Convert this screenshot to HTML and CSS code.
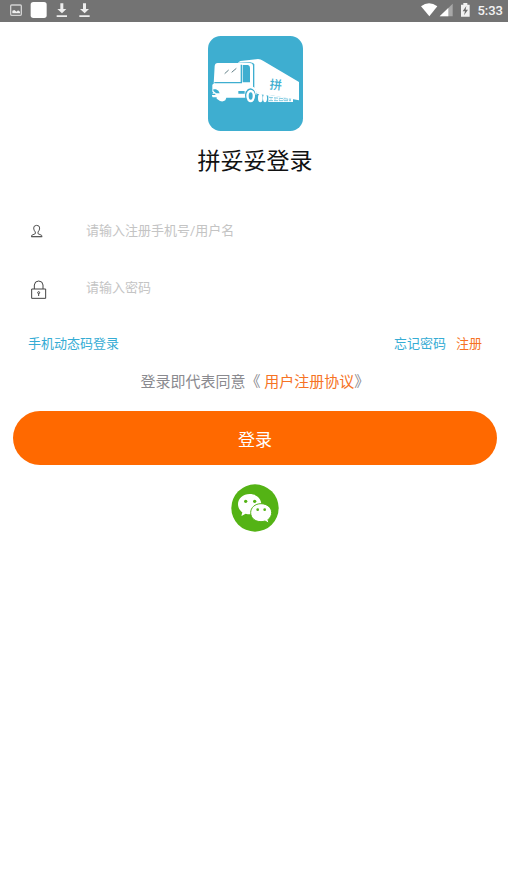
FILE: index.html
```html
<!DOCTYPE html>
<html lang="zh-CN">
<head>
<meta charset="utf-8">
<meta name="viewport" content="width=device-width, initial-scale=1">
<title>拼妥妥登录</title>
<link rel="stylesheet" href="styles.css">
</head>
<body>
<header class="status">
  <svg class="status-icons" width="92" height="22" viewBox="0 0 276 66" aria-hidden="true">
    <rect x="32" y="15" width="32" height="31" rx="3" fill="none" stroke="#d2d2d2" stroke-width="4"/>
    <path d="M37 40V32l6-2 7 5 4-4 6 4v5z" fill="#f0f0f0"/>
    <rect x="92" y="6" width="48" height="48" rx="8" fill="#fff"/>
    <g fill="#eee">
      <path d="M181 10h9v17h9l-13 13-14-13h9zM170 46h31v5h-31z"/>
      <path d="M249 10h9v17h9l-13 13-14-13h9zM238 46h31v5h-31z"/>
    </g>
  </svg>
  <div class="status-right">
    <svg class="status-icons" width="52" height="22" viewBox="36 0 156 66" aria-hidden="true">
      <path d="M36 19Q60 0 85 19L61 49z" fill="#fff"/>
      <path d="M131 11v38H92z" fill="#a8a8a8"/>
      <path d="M118 24v25H92z" fill="#fff"/>
      <path d="M163 9h12v5h7v36h-26V14h7z" fill="#f0f0f0"/>
      <path d="M172 18l-11 16h7l-3 12 12-17h-7z" fill="#6c6c6c"/>
    </svg>
    <span class="clock">5:33</span>
  </div>
</header>
<main class="login">
  <svg class="logo" width="95" height="95" viewBox="21 18 285 285" role="img" aria-label="拼妥妥">
    <rect x="21" y="18" width="285" height="285" rx="38" fill="#3eaed0"/>
    <path d="M118 93L171 87Q179 88 186 92L294 156V211L190 192 160 186V103Q158 98 148 97L110 98z" fill="#fff"/>
    <path d="M50 99H146Q156 99 156 108V188H134V203H76L73 211Q66 216 57 213L47 206V202H35Q31 197 34 191L37 188 34 185V164L38 161 41 108Q42 99 50 99z" fill="#fff"/>
    <path d="M40 158H121V104" fill="none" stroke="#3eaed0" stroke-width="4"/>
    <path d="M125 105H141Q147 106 147 114V157H125z" fill="#3eaed0"/>
    <path d="M71 131l12-11M92 127l14-12" stroke="#617f87" stroke-width="3"/>
    <path d="M37 178H45Q54 181 56 190H46Q40 186 37 182zM112 183H131V191H112zM33 191H43V195H33z" fill="#3eaed0"/>
    <ellipse cx="150" cy="196" rx="18" ry="25" fill="#3eaed0"/>
    <path d="M130 180Q135 170 149 168Q164 170 167 186L170 194H164Q162 177 149 175Q139 176 136 183z" fill="#fff"/>
    <ellipse cx="149" cy="198" rx="13" ry="19" fill="#fff"/>
    <ellipse cx="149" cy="198" rx="6" ry="11" fill="#3eaed0"/>
    <path d="M166 187L204 194V218H168z" fill="#3eaed0"/>
    <path d="M164 185L204 191V197L168 191z" fill="#fff"/>
    <ellipse cx="178" cy="204" rx="7" ry="13" fill="#fff"/>
    <ellipse cx="192" cy="205" rx="6" ry="12" fill="#fff"/>
    <path d="M202 194L276 206V216H202z" fill="#fff"/>
    <path d="M204 202L270 208M204 212H270" stroke="#3eaed0" stroke-width="2" stroke-dasharray="12 3"/>
    <path d="M210 204v8M222 204v8M235 205v8M248 206v6M260 207v5" stroke="#8ccee2" stroke-width="2"/>
    <text class="logo-text" x="206" y="178" transform="rotate(5 224 164)">拼</text>
  </svg>
  <h1 class="title">拼妥妥登录</h1>
  <form class="form">
    <div class="field">
      <label class="field-label" for="user" aria-label="用户名">
        <svg width="22" height="22" viewBox="24 12 66 66" fill="none" stroke="#555" stroke-width="3" aria-hidden="true">
          <path d="M46 48Q41 43 41 36Q41 28 50 28Q59 28 59 36Q59 43 54 48V53L65 58V62H35V58L46 53zM33 62H67"/>
        </svg>
      </label>
      <input class="field-input" id="user" type="text" placeholder="请输入注册手机号/用户名">
    </div>
    <div class="field">
      <label class="field-label" for="password" aria-label="密码">
        <svg width="22" height="22" viewBox="24 184 66 66" fill="none" stroke="#444" stroke-width="3" aria-hidden="true">
          <path d="M35 220H77V248H35zM43 220V208Q44 196 56 196Q68 196 69 208V220"/>
          <circle cx="56" cy="231" r="3"/><path d="M56 234v7"/>
        </svg>
      </label>
      <input class="field-input" id="password" type="password" placeholder="请输入密码">
    </div>
    <nav class="links">
      <a class="link" href="#code">手机动态码登录</a>
      <a class="link link-end" href="#forgot">忘记密码</a>
      <a class="link link-accent" href="#register">注册</a>
    </nav>
    <p class="agreement">登录即代表同意《 <a class="link-accent" href="#terms">用户注册协议</a>》</p>
    <button class="submit" type="submit">登录</button>
  </form>
  <button class="wechat" type="button" aria-label="微信登录">
    <svg width="48" height="48" viewBox="27 18 144 144" aria-hidden="true">
      <circle cx="99" cy="90" r="71" fill="#54b315"/>
      <path d="M83 48C63 48 48 61 48 79C48 89 53 97 61 103L58 114 71 107Q77 109 84 109C103 109 118 96 118 79C118 61 103 48 83 48z" fill="#fff"/>
      <path d="M117 77C99 77 86 89 86 104C86 120 99 131 117 131Q123 131 129 129L141 136 138 125C145 119 149 112 149 104C149 89 135 77 117 77z" fill="#fff" stroke="#54b315" stroke-width="3"/>
      <g fill="#54b315"><circle cx="71" cy="70" r="5"/><circle cx="98" cy="70" r="5"/><circle cx="107" cy="95" r="4"/><circle cx="128" cy="95" r="4"/></g>
    </svg>
  </button>
</main>
</body>
</html>
```
FILE: styles.css
```css
* {
  box-sizing: border-box;
}

body {
  margin: 0;
  background: #fff;
  color: #111;
  font-family: Roboto, "Noto Sans CJK SC", sans-serif;
}

.status {
  display: flex;
  justify-content: space-between;
  height: 22px;
  background: #737373;
}

.status-icons {
  display: block;
}

.status-right {
  display: flex;
  gap: 4px;
  padding-right: 5px;
}

.clock {
  color: #f4f4f4;
  font-size: 13px;
  font-weight: 500;
  line-height: 22px;
}

.login {
  display: flex;
  flex-direction: column;
  align-items: center;
  padding: 14px 11px 14px 13px;
}

.logo {
  display: block;
}

.logo-text {
  fill: #3eaed0;
  font-family: "Noto Sans CJK SC", sans-serif;
  font-size: 37px;
  font-weight: 500;
}

.title {
  margin: 19px 0 28px;
  font-size: 23px;
  font-weight: 400;
  line-height: 24px;
}

.form {
  width: 100%;
}

.field {
  display: flex;
  align-items: center;
  height: 57px;
  padding: 0 15px;
}

.field-label {
  display: flex;
  flex: 0 0 58px;
}

.field-input {
  flex: 1;
  min-width: 0;
  height: 40px;
  padding: 0;
  border: 0;
  outline: 0;
  background: none;
  color: #333;
  font: inherit;
  font-size: 13px;
}

.field-input::placeholder {
  color: #c4c4c4;
}

.links {
  display: flex;
  gap: 10px;
  padding: 18px 15px 0;
  font-size: 13px;
  line-height: 20px;
}

.link {
  color: #35acd4;
  text-decoration: none;
}

.link-end {
  margin-left: auto;
}

.link-accent {
  color: #f67324;
  text-decoration: none;
}

.agreement {
  margin: 18px 0 19px;
  color: #8a8a8f;
  font-size: 15px;
  line-height: 20px;
  text-align: center;
}

.submit {
  display: block;
  width: 100%;
  height: 54px;
  border: 0;
  border-radius: 27px;
  background: #ff6900;
  color: #fff;
  font: inherit;
  font-size: 17px;
}

.wechat {
  margin-top: 19px;
  padding: 0;
  border: 0;
  border-radius: 50%;
  background: none;
}

.wechat svg {
  display: block;
}
```
